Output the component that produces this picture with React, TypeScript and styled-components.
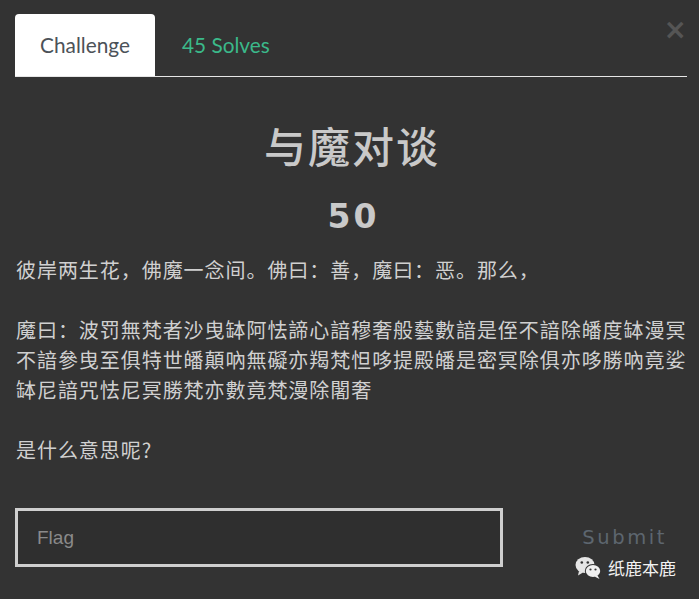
import React from "react";
import styled, { createGlobalStyle } from "styled-components";

const Global = createGlobalStyle`
  html, body { margin: 0; padding: 0; background: #333333; }
  body { font-family: "Noto Sans CJK SC", "Noto Sans", sans-serif; }
  * { box-sizing: border-box; }
`;

const Page = styled.div`
  position: relative;
  width: 699px;
  height: 599px;
  background: #333333;
  overflow: hidden;
`;

const Nav = styled.nav`
  display: flex;
  align-items: stretch;
  margin: 14px 12px 0 15px;
  height: 63px;
  border-bottom: 1px solid #e6e6e6;
`;

const Tab = styled.div<{ $active?: boolean }>`
  display: flex;
  align-items: center;
  width: ${(p) => (p.$active ? "140px" : "auto")};
  justify-content: ${(p) => (p.$active ? "center" : "flex-start")};
  padding: 0 0 2px ${(p) => (p.$active ? "0" : "27px")};
  height: 62px;
  font-family: Lato, "Noto Sans", sans-serif;
  font-size: 20.8px;
  color: ${(p) => (p.$active ? "#4c5258" : "#3bb98a")};
  background: ${(p) => (p.$active ? "#ffffff" : "transparent")};
  border-radius: 4px 4px 0 0;
`;

const Close = styled.button`
  position: absolute;
  top: 16px;
  right: 12px;
  border: 0;
  padding: 0;
  background: transparent;
  font-family: "DejaVu Sans", sans-serif;
  font-weight: bold;
  font-size: 28px;
  line-height: 28px;
  color: #555555;
`;

const Body = styled.main`
  padding: 0 11px 0 16px;
`;

const Title = styled.h1`
  margin: 42px 0 0;
  text-align: center;
  font-family: "Noto Sans CJK SC", sans-serif;
  font-weight: 500;
  font-size: 42px;
  line-height: 52px;
  letter-spacing: 2px;
  color: #c9c9c9;
`;

const Points = styled.h2`
  margin: 26px 0 0;
  text-align: center;
  font-family: "DejaVu Sans", sans-serif;
  font-weight: bold;
  font-size: 33px;
  line-height: 40px;
  letter-spacing: 3px;
  padding-left: 3px;
  color: #c9c9c9;
`;

const Description = styled.div`
  margin-top: 18px;
  font-family: "Noto Sans CJK SC", sans-serif;
  font-size: 20px;
  letter-spacing: 0.95px;
  line-height: 30px;
  color: #d0d0d0;
`;

const Para = styled.p`
  margin: 0 0 30px;
  &:last-child { margin-bottom: 0; }
`;

const Form = styled.form`
  display: flex;
  align-items: center;
  margin: 43px 12px 0 15px;
`;

const FlagInput = styled.input`
  width: 488px;
  height: 59px;
  border: 3px solid #cfcfcf;
  background: #2f2f2f;
  padding: 0 0 0 19px;
  font-family: "Liberation Sans", Arial, sans-serif;
  font-size: 19px;
  color: #ddd;
  outline: none;
  &::placeholder { color: #8a8a8a; }
`;

const SubmitButton = styled.button`
  margin-left: auto;
  margin-right: 20px;
  border: 0;
  background: transparent;
  padding: 0;
  font-family: "DejaVu Sans", sans-serif;
  font-size: 19.5px;
  letter-spacing: 2.6px;
  color: #5d666f;
`;

const Watermark = styled.div`
  position: absolute;
  left: 575px;
  top: 555px;
  display: flex;
  align-items: center;
  gap: 6px;
  font-family: "Noto Sans CJK SC", sans-serif;
  font-size: 17px;
  color: #f2f2f2;
`;

const WeChatIcon = () => (
  <svg width="27" height="24" viewBox="0 0 27 24">
    <ellipse cx="10" cy="9" rx="9.5" ry="8" fill="#e6e6e6" />
    <path d="M4 15 L3 19.5 L8 16.5 Z" fill="#e6e6e6" />
    <circle cx="6.8" cy="6.5" r="1.3" fill="#333" />
    <circle cx="12.8" cy="6.5" r="1.3" fill="#333" />
    <ellipse cx="18" cy="15" rx="8.2" ry="7" fill="#333" />
    <ellipse cx="18" cy="15" rx="7.2" ry="6.1" fill="#f0f0f0" />
    <path d="M22.5 19.5 L24.5 23 L19.5 20.5 Z" fill="#f0f0f0" />
    <circle cx="15.5" cy="13.5" r="1.1" fill="#333" />
    <circle cx="20.5" cy="13.5" r="1.1" fill="#333" />
  </svg>
);

export default function App() {
  return (
    <Page>
      <Global />
      <Nav>
        <Tab $active>Challenge</Tab>
        <Tab>45 Solves</Tab>
      </Nav>
      <Close aria-label="Close">×</Close>
      <Body>
        <Title>与魔对谈</Title>
        <Points>50</Points>
        <Description>
          <Para>彼岸两生花，佛魔一念间。佛曰：善，魔曰：恶。那么，</Para>
          <Para>
            魔曰：波罚無梵者沙曳缽阿怯諦心諳穆奢般藝數諳是侄不諳除皤度缽漫冥不諳參曳至俱特世皤顛吶無礙亦羯梵怛哆提殿皤是密冥除俱亦哆勝吶竟娑缽尼諳咒怯尼冥勝梵亦數竟梵漫除闍奢
          </Para>
          <Para>是什么意思呢?</Para>
        </Description>
      </Body>
      <Form onSubmit={(e) => e.preventDefault()}>
        <FlagInput placeholder="Flag" />
        <SubmitButton type="submit">Submit</SubmitButton>
      </Form>
      <Watermark>
        <WeChatIcon />
        <span>纸鹿本鹿</span>
      </Watermark>
    </Page>
  );
}
